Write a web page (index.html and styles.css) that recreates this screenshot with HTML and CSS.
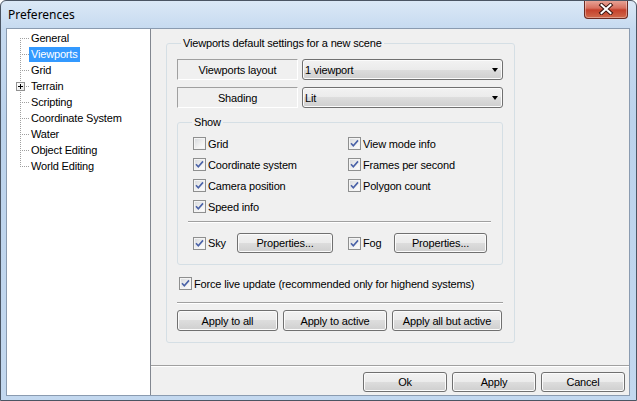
FILE: index.html
```html
<!DOCTYPE html>
<html>
<head>
<meta charset="utf-8">
<link rel="stylesheet" href="styles.css">
</head>
<body>
<div class="window">
  <div class="titlebar">
    <span class="title">Preferences</span>
    <div class="close">
      <svg width="16" height="12" viewBox="0 0 16 12">
        <path d="M3.5 2 L12.5 10 M12.5 2 L3.5 10" stroke="#3b1510" stroke-width="4" stroke-linecap="square" fill="none"/>
        <path d="M3.5 2 L12.5 10 M12.5 2 L3.5 10" stroke="#ffffff" stroke-width="2" stroke-linecap="square" fill="none"/>
      </svg>
    </div>
  </div>
  <div class="framebody">
    <div class="client">
      <div class="tree">
        <div class="node first"><span class="gut"></span><span class="lbl">General</span></div>
        <div class="node"><span class="gut"></span><span class="lbl sel">Viewports</span></div>
        <div class="node"><span class="gut"></span><span class="lbl">Grid</span></div>
        <div class="node"><span class="gut"><span class="plus"></span></span><span class="lbl">Terrain</span></div>
        <div class="node"><span class="gut"></span><span class="lbl">Scripting</span></div>
        <div class="node"><span class="gut"></span><span class="lbl">Coordinate System</span></div>
        <div class="node"><span class="gut"></span><span class="lbl">Water</span></div>
        <div class="node"><span class="gut"></span><span class="lbl">Object Editing</span></div>
        <div class="node last"><span class="gut"></span><span class="lbl">World Editing</span></div>
      </div>
      <div class="main">
        <div class="content">
          <fieldset class="group">
            <legend>Viewports default settings for a new scene</legend>
            <div class="setrow">
              <div class="static">Viewports layout</div>
              <div class="combo"><span>1 viewport</span><span class="arrow"></span></div>
            </div>
            <div class="setrow">
              <div class="static">Shading</div>
              <div class="combo"><span>Lit</span><span class="arrow"></span></div>
            </div>
            <fieldset class="show">
              <legend>Show</legend>
              <div class="checks">
                <label class="chk"><span class="cb"></span>Grid</label>
                <label class="chk"><span class="cb on"><svg width="11" height="11" viewBox="0 0 11 11"><path d="M2 5.2 L4.3 7.8 L9 2.4" stroke="#4a62a8" stroke-width="1.6" fill="none"/></svg></span>View mode info</label>
                <label class="chk"><span class="cb on"><svg width="11" height="11" viewBox="0 0 11 11"><path d="M2 5.2 L4.3 7.8 L9 2.4" stroke="#4a62a8" stroke-width="1.6" fill="none"/></svg></span>Coordinate system</label>
                <label class="chk"><span class="cb on"><svg width="11" height="11" viewBox="0 0 11 11"><path d="M2 5.2 L4.3 7.8 L9 2.4" stroke="#4a62a8" stroke-width="1.6" fill="none"/></svg></span>Frames per second</label>
                <label class="chk"><span class="cb on"><svg width="11" height="11" viewBox="0 0 11 11"><path d="M2 5.2 L4.3 7.8 L9 2.4" stroke="#4a62a8" stroke-width="1.6" fill="none"/></svg></span>Camera position</label>
                <label class="chk"><span class="cb on"><svg width="11" height="11" viewBox="0 0 11 11"><path d="M2 5.2 L4.3 7.8 L9 2.4" stroke="#4a62a8" stroke-width="1.6" fill="none"/></svg></span>Polygon count</label>
                <label class="chk"><span class="cb on"><svg width="11" height="11" viewBox="0 0 11 11"><path d="M2 5.2 L4.3 7.8 L9 2.4" stroke="#4a62a8" stroke-width="1.6" fill="none"/></svg></span>Speed info</label>
              </div>
              <div class="sep"></div>
              <div class="envrow">
                <label class="chk sky"><span class="cb on"><svg width="11" height="11" viewBox="0 0 11 11"><path d="M2 5.2 L4.3 7.8 L9 2.4" stroke="#4a62a8" stroke-width="1.6" fill="none"/></svg></span>Sky</label>
                <div class="btn prop1">Properties...</div>
                <label class="chk fog"><span class="cb on"><svg width="11" height="11" viewBox="0 0 11 11"><path d="M2 5.2 L4.3 7.8 L9 2.4" stroke="#4a62a8" stroke-width="1.6" fill="none"/></svg></span>Fog</label>
                <div class="btn prop2">Properties...</div>
              </div>
            </fieldset>
            <label class="chk force"><span class="cb on"><svg width="11" height="11" viewBox="0 0 11 11"><path d="M2 5.2 L4.3 7.8 L9 2.4" stroke="#4a62a8" stroke-width="1.6" fill="none"/></svg></span>Force live update (recommended only for highend systems)</label>
            <div class="sep wide"></div>
            <div class="applyrow">
              <div class="btn a1">Apply to all</div>
              <div class="btn a2">Apply to active</div>
              <div class="btn a3">Apply all but active</div>
            </div>
          </fieldset>
        </div>
        <div class="footer">
          <div class="btn fb">Ok</div>
          <div class="btn fb">Apply</div>
          <div class="btn fb">Cancel</div>
        </div>
      </div>
    </div>
  </div>
</div>
</body>
</html>
```
FILE: styles.css
```css
html, body {
  margin: 0;
  padding: 0;
}
body {
  font-family: "Liberation Sans", Arial, sans-serif;
  font-size: 11px;
  letter-spacing: -0.17px;
  color: #000;
  background: #fff;
}
.window {
  width: 637px;
  height: 401px;
  box-sizing: border-box;
  border: 1px solid #4b5563;
  border-radius: 6px 6px 0 0;
  background: linear-gradient(to bottom, #dbe8f6 0px, #c6daf0 28px, #bcd3ec 120px, #c3d8ef 401px);
  display: flex;
  flex-direction: column;
  overflow: hidden;
}
.titlebar {
  height: 27px;
  display: flex;
  align-items: flex-start;
  flex: none;
}
.title {
  font-family: "Noto Sans", "Open Sans", sans-serif;
  font-size: 12px;
  letter-spacing: 0;
  line-height: 16px;
  margin: 6px 0 0 7px;
  color: #000;
}
.close {
  margin-left: auto;
  margin-right: 8px;
  margin-top: -1px;
  width: 44px;
  height: 19px;
  box-sizing: border-box;
  border: 1px solid #6b2a22;
  border-top: none;
  border-radius: 0 0 4px 4px;
  background: linear-gradient(to bottom, #e9a99c 0%, #d8705f 45%, #c5412c 55%, #d06a4c 100%);
  box-shadow: inset 0 0 0 1px rgba(255,255,255,0.35);
  display: flex;
  align-items: center;
  justify-content: center;
}
.framebody {
  flex: 1;
  padding: 0 6px 4px 5px;
  display: flex;
}
.client {
  width: 624px;
  height: 368px;
  box-sizing: border-box;
  border: 1px solid #8a9bb0;
  display: flex;
  background: #f0f0f0;
}
.tree {
  width: 144px;
  flex: none;
  box-sizing: border-box;
  background: #fff;
  border-right: 1px solid #828790;
  padding-top: 1px;
}
.node {
  display: flex;
  height: 16px;
  align-items: center;
}
.gut {
  width: 22px;
  height: 16px;
  flex: none;
  position: relative;
}
.gut::before {
  content: "";
  position: absolute;
  left: 13px;
  top: 0;
  width: 1px;
  height: 16px;
  background: repeating-linear-gradient(to bottom, #a0a0a0 0 1px, transparent 1px 2px);
}
.first .gut::before {
  top: 8px;
  height: 8px;
}
.last .gut::before {
  height: 9px;
}
.gut::after {
  content: "";
  position: absolute;
  left: 14px;
  top: 8px;
  width: 8px;
  height: 1px;
  background: repeating-linear-gradient(to right, transparent 0 1px, #a0a0a0 1px 2px);
}
.plus {
  position: absolute;
  left: 9px;
  top: 4px;
  width: 9px;
  height: 9px;
  box-sizing: border-box;
  border: 1px solid #919191;
  background: linear-gradient(135deg, #ffffff, #e6e6e6);
  z-index: 1;
}
.plus::before {
  content: "";
  position: absolute;
  left: 1px;
  top: 3px;
  width: 5px;
  height: 1px;
  background: #000;
}
.plus::after {
  content: "";
  position: absolute;
  left: 3px;
  top: 1px;
  width: 1px;
  height: 5px;
  background: #000;
}
.lbl {
  padding: 0 2px;
  line-height: 15px;
  white-space: nowrap;
}
.lbl.sel {
  background: #3399ff;
  color: #fff;
}
.main {
  width: 478px;
  flex: none;
  display: flex;
  flex-direction: column;
  background: #f0f0f0;
}
.content {
  flex: 1;
  padding: 8px 0 0 15px;
}
fieldset {
  margin: 0;
  min-width: 0;
  box-sizing: border-box;
  border: 1px solid #d5dfe5;
  border-radius: 3px;
}
legend {
  margin-left: 4px;
  padding: 0 2px;
  line-height: 13px;
}
.group {
  width: 349px;
  padding: 9px 11px 11px 10px;
}
.setrow {
  display: flex;
  gap: 4px;
  height: 21px;
  margin-bottom: 7px;
}
.static {
  width: 121px;
  box-sizing: border-box;
  border: 1px solid;
  border-color: #a0a0a0 #ffffff #ffffff #a0a0a0;
  display: flex;
  align-items: center;
  justify-content: center;
}
.combo {
  width: 201px;
  box-sizing: border-box;
  border: 1px solid #707070;
  border-radius: 3px;
  background: linear-gradient(to bottom, #f2f2f2 0%, #ebebeb 50%, #dddddd 50%, #cfcfcf 100%);
  box-shadow: inset 0 0 0 1px #fbfbfb;
  display: flex;
  align-items: center;
  padding: 0 4px 0 2px;
}
.arrow {
  margin-left: auto;
  width: 0;
  height: 0;
  border-left: 3.5px solid transparent;
  border-right: 3.5px solid transparent;
  border-top: 4px solid #000;
}
.show {
  width: 326px;
  margin-top: 8px;
  padding: 4px 11px 11px 10px;
}
.checks {
  display: grid;
  grid-template-columns: 155px 1fr;
  grid-auto-rows: 21px;
  padding-left: 5px;
}
.chk {
  display: flex;
  align-items: center;
  white-space: nowrap;
}
.cb {
  width: 13px;
  height: 13px;
  flex: none;
  box-sizing: border-box;
  border: 1px solid #8e8f8f;
  background: linear-gradient(135deg, #d5d8dc 0%, #f2f2f2 60%, #ffffff 100%);
  box-shadow: inset 0 0 0 1px #f4f4f4;
  margin-right: 2px;
  display: flex;
  align-items: center;
  justify-content: center;
}
.sep {
  height: 1px;
  background: #a0a0a0;
  border-bottom: 1px solid #fff;
  margin-top: 4px;
}
.envrow {
  display: flex;
  align-items: center;
  height: 20px;
  margin-top: 10px;
  padding-left: 5px;
}
.sky {
  width: 44px;
}
.fog {
  width: 46px;
  margin-left: 15px;
}
.btn {
  box-sizing: border-box;
  border: 1px solid #707070;
  border-radius: 3px;
  background: linear-gradient(to bottom, #f2f2f2 0%, #ebebeb 50%, #dddddd 50%, #cfcfcf 100%);
  box-shadow: inset 0 0 0 1px #fbfbfb;
  display: flex;
  align-items: center;
  justify-content: center;
  white-space: nowrap;
}
.prop1 {
  width: 96px;
  height: 20px;
}
.prop2 {
  width: 93px;
  height: 20px;
}
.force {
  height: 21px;
  margin-top: 8px;
  padding-left: 2px;
}
.force .cb {
  margin-right: 2px;
}
.sep.wide {
  margin-top: 8px;
}
.applyrow {
  display: flex;
  gap: 5px;
  margin-top: 6px;
}
.applyrow .btn {
  height: 21px;
}
.a1 { width: 101px; }
.a2 { width: 104px; }
.a3 { width: 110px; }
.footer {
  height: 30px;
  box-sizing: border-box;
  border-top: 1px solid #a0a0a0;
  box-shadow: inset 0 1px 0 #ffffff;
  display: flex;
  justify-content: flex-end;
  gap: 5px;
  padding: 6px 4px 0 0;
}
.fb {
  width: 84px;
  height: 20px;
}
```
